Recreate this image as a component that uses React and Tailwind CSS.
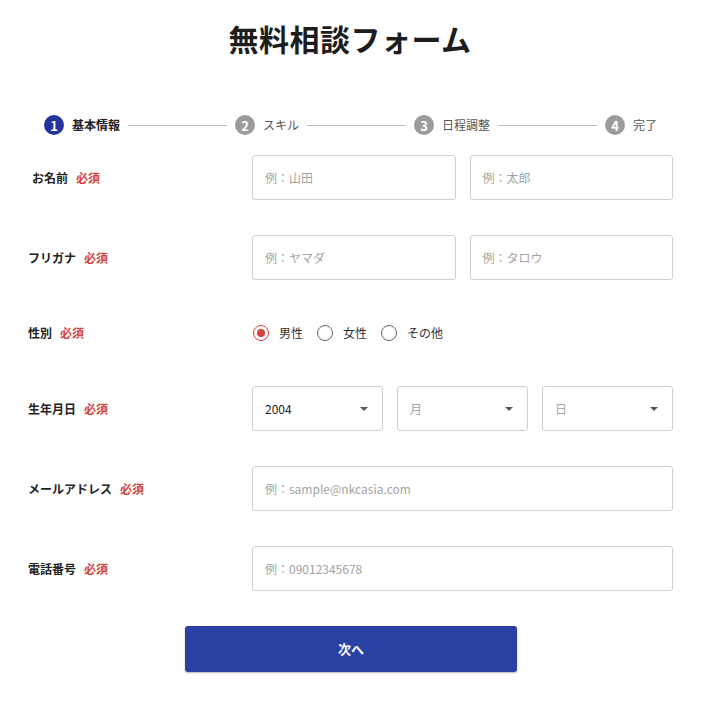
import React from "react";

const font = { fontFamily: '"Noto Sans CJK JP", "Noto Sans", sans-serif' };

function Step({ n, label, active }) {
  return (
    <div className="flex items-center gap-2">
      <span
        className={`flex h-5 w-5 items-center justify-center rounded-full text-[13px] font-bold leading-none text-white ${
          active ? "bg-[#23349a]" : "bg-[#9b9b9b]"
        }`}
      >
        {n}
      </span>
      <span className={`text-[12px] leading-none ${active ? "font-bold text-[#222]" : "text-[#555]"}`}>{label}</span>
    </div>
  );
}

function Line() {
  return <div className="mx-2 h-px w-[99px] bg-[#bdbdbd]" />;
}

function Label({ children, first }) {
  return (
    <div
      className={`flex w-[252px] shrink-0 items-center gap-2 text-[12px] font-bold text-[#222] ${
        first ? "pl-[32px]" : "pl-[28px]"
      }`}
    >
      <span>{children}</span>
      <span className="text-[#d2443c]">必須</span>
    </div>
  );
}

function Input({ placeholder }) {
  return (
    <div className="flex h-[45px] items-center rounded-[3px] border border-[#cfcfcf] px-3 text-[12px] text-[#a3a3a3]">
      {placeholder}
    </div>
  );
}

function Select({ value, placeholder }) {
  return (
    <div className="flex h-[45px] items-center justify-between rounded-[3px] border border-[#cfcfcf] pl-3 pr-[14px] text-[12px]">
      <span className={value ? "text-[#222]" : "text-[#a3a3a3]"}>{value || placeholder}</span>
      <span className="h-0 w-0 border-x-[4px] border-t-[4px] border-x-transparent border-t-[#555]" />
    </div>
  );
}

function Radio({ label, checked }) {
  return (
    <div className="flex items-center gap-[10px]">
      <span
        className={`flex h-4 w-4 items-center justify-center rounded-full border-[1.5px] ${
          checked ? "border-[#d2443c]" : "border-[#666]"
        }`}
      >
        {checked && <span className="h-2 w-2 rounded-full bg-[#d2443c]" />}
      </span>
      <span className="text-[12px] text-[#333]">{label}</span>
    </div>
  );
}

function Row({ label, children, h = "h-[45px]", first }) {
  return (
    <div className={`flex ${h} items-center`}>
      <Label first={first}>{label}</Label>
      <div className="w-[421px] shrink-0">{children}</div>
    </div>
  );
}

export default function App() {
  return (
    <div className="h-[704px] w-[720px] bg-white" style={font}>
      <h1 className="pr-5 pt-[18px] text-center text-[30px] font-bold leading-[40px] tracking-[0.5px] text-[#1d1d1d]">
        無料相談フォーム
      </h1>
      <div className="mt-[57px] flex h-5 items-center pl-[44px]">
        <Step n="1" label="基本情報" active />
        <Line />
        <Step n="2" label="スキル" />
        <Line />
        <Step n="3" label="日程調整" />
        <Line />
        <Step n="4" label="完了" />
      </div>
      <div className="mt-5 flex flex-col gap-[35px]">
        <Row label="お名前" first>
          <div className="grid grid-cols-2 gap-[14px]">
            <Input placeholder="例：山田" />
            <Input placeholder="例：太郎" />
          </div>
        </Row>
        <Row label="フリガナ">
          <div className="grid grid-cols-2 gap-[14px]">
            <Input placeholder="例：ヤマダ" />
            <Input placeholder="例：タロウ" />
          </div>
        </Row>
        <Row label="性別" h="h-[36px]">
          <div className="flex items-center gap-[14px] pl-px">
            <Radio label="男性" checked />
            <Radio label="女性" />
            <Radio label="その他" />
          </div>
        </Row>
        <Row label="生年月日">
          <div className="grid grid-cols-3 gap-[14px]">
            <Select value="2004" />
            <Select placeholder="月" />
            <Select placeholder="日" />
          </div>
        </Row>
        <Row label="メールアドレス">
          <Input placeholder="例：sample@nkcasia.com" />
        </Row>
        <Row label="電話番号">
          <Input placeholder="例：09012345678" />
        </Row>
        <div className="flex pl-[185px]">
          <button className="flex h-[46px] w-[332px] items-center justify-center rounded-[3px] bg-[#2a41a4] text-[13px] font-bold text-white shadow-[0_1px_2px_rgba(0,0,0,0.3)]">
            次へ
          </button>
        </div>
      </div>
    </div>
  );
}
